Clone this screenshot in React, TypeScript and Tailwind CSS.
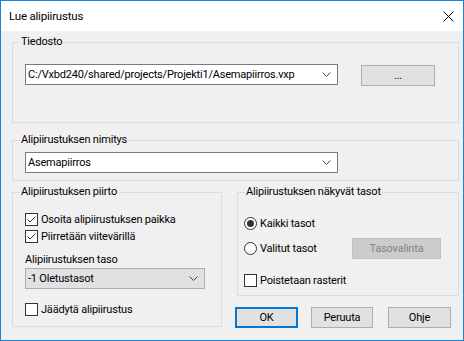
import React from "react"

const font = { fontFamily: '"Segoe UI", Roboto, "Liberation Sans", sans-serif' }

function Chevron() {
  return (
    <svg width="9" height="5" viewBox="0 0 9 5" className="shrink-0">
      <path d="M0.5 0.5 L4.5 4.5 L8.5 0.5" fill="none" stroke="#444" strokeWidth="1" />
    </svg>
  )
}

function Check({ checked, label }: { checked?: boolean; label: string }) {
  return (
    <div className="flex items-center h-[13px]">
      <div className="w-[13px] h-[13px] border border-[#333333] bg-white flex items-center justify-center shrink-0">
        {checked && (
          <svg width="11" height="11" viewBox="0 0 11 11">
            <path d="M1.5 5.5 L4 8 L9.5 2.5" fill="none" stroke="#333" strokeWidth="1" />
          </svg>
        )}
      </div>
      <span className="ml-[3px] leading-[15px] whitespace-nowrap">{label}</span>
    </div>
  )
}

function Radio({ checked, label }: { checked?: boolean; label: string }) {
  return (
    <div className="flex items-center h-[13px]">
      <div className="w-[13px] h-[13px] rounded-full border border-[#333333] bg-white flex items-center justify-center shrink-0">
        {checked && <div className="w-[7px] h-[7px] rounded-full bg-[#333333]" />}
      </div>
      <span className="ml-[3px] leading-[15px] whitespace-nowrap">{label}</span>
    </div>
  )
}

function Group({ label, className, children }: { label: string; className: string; children: React.ReactNode }) {
  return (
    <div className={`relative border border-[#dcdcdc] ${className}`}>
      <span className="absolute -top-[9px] left-[7px] px-[1px] bg-[#f0f0f0] leading-[15px] whitespace-nowrap">
        {label}
      </span>
      {children}
    </div>
  )
}

function Combo({ value, width }: { value: string; width: string }) {
  return (
    <div className={`${width} h-[21px] border border-[#7a7a7a] bg-white flex items-center justify-between pl-[2px] pr-[6px]`}>
      <span className="leading-[15px] whitespace-nowrap">{value}</span>
      <Chevron />
    </div>
  )
}

export default function App() {
  return (
    <div
      style={font}
      className="w-[464px] h-[341px] border border-[#1883d7] flex flex-col text-black text-[11px] tracking-[-0.2px] overflow-hidden"
    >
      {/* Title bar */}
      <div className="h-[30px] bg-white flex items-center justify-between pl-[8px] pr-[9px] shrink-0">
        <span className="text-[11.5px] leading-[15px]">Lue alipiirustus</span>
        <svg width="11" height="11" viewBox="0 0 11 11">
          <path d="M0.5 0.5 L10.5 10.5 M10.5 0.5 L0.5 10.5" stroke="#000" strokeWidth="1" />
        </svg>
      </div>

      {/* Body */}
      <div className="flex-1 bg-[#f0f0f0] pl-[11px] pr-[4px] flex flex-col">
        <Group label="Tiedosto" className="mt-[11px] h-[81px] pt-[21px] pl-[12px]">
          <div className="flex items-start">
            <Combo value="C:/Vxbd240/shared/projects/Projekti1/Asemapiirros.vxp" width="w-[313px]" />
            <div className="ml-[23px] mt-[1px] w-[74px] h-[21px] border border-[#adadad] bg-[#e1e1e1] flex items-center justify-center leading-[15px]">
              ...
            </div>
          </div>
        </Group>

        <Group label="Alipiirustuksen nimitys" className="mt-[17px] h-[41px] pt-[11px] pl-[12px]">
          <Combo value="Asemapiirros" width="w-[313px]" />
        </Group>

        <div className="mt-[11px] flex gap-[15px]">
          <Group label="Alipiirustuksen piirto" className="w-[210px] h-[135px] pt-[20px] pl-[12px] flex flex-col">
            <Check checked label="Osoita alipiirustuksen paikka" />
            <div className="mt-[4px]">
              <Check checked label="Piirretään viitevärillä" />
            </div>
            <span className="mt-[9px] leading-[15px]">Alipiirustuksen taso</span>
            <div className="mt-[1px] w-[180px] h-[21px] border border-[#adadad] bg-[#e1e1e1] flex items-center justify-between pl-[2px] pr-[6px]">
              <span className="leading-[15px]">-1 Oletustasot</span>
              <Chevron />
            </div>
            <div className="mt-[14px]">
              <Check label="Jäädytä alipiirustus" />
            </div>
          </Group>

          <div className="flex flex-col w-[222px]">
            <Group label="Alipiirustuksen näkyvät tasot" className="h-[104px] pt-[24px] pl-[6px] flex flex-col">
              <Radio checked label="Kaikki tasot" />
              <div className="mt-[8px] h-[21px] flex items-center">
                <Radio label="Valitut tasot" />
                <div className="ml-auto mr-[17px] w-[89px] h-[21px] border border-[#bfbfbf] bg-[#cccccc] flex items-center justify-center leading-[15px] text-[#838383]">
                  Tasovalinta
                </div>
              </div>
              <div className="mt-[15px]">
                <Check label="Poistetaan rasterit" />
              </div>
            </Group>

            <div className="mt-[11px] -ml-[2px] flex">
              <div className="w-[63px] h-[21px] border-2 border-[#0078d7] bg-[#e1e1e1] flex items-center justify-center leading-[15px]">
                OK
              </div>
              <div className="ml-[13px] w-[62px] h-[21px] border border-[#adadad] bg-[#e1e1e1] flex items-center justify-center leading-[15px]">
                Peruuta
              </div>
              <div className="ml-[15px] w-[63px] h-[21px] border border-[#adadad] bg-[#e1e1e1] flex items-center justify-center leading-[15px]">
                Ohje
              </div>
            </div>
          </div>
        </div>
      </div>
    </div>
  )
}
